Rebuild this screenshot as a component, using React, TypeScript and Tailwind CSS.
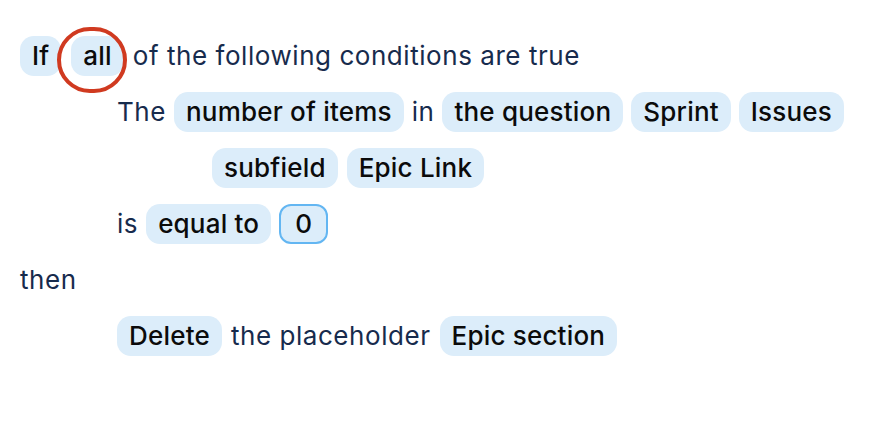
import React from "react";

function Chip({ children, outlined = false }: { children: React.ReactNode; outlined?: boolean }) {
  return (
    <span
      className={
        outlined
          ? "inline-flex items-center h-10 px-[14px] rounded-[12px] bg-[#dcedfa] border-2 border-[#63b6f2] text-[#0b0b0b] font-medium tracking-[0.2px]"
          : "inline-flex items-center h-10 px-3 rounded-[14px] bg-[#dcedfa] text-[#0b0b0b] font-medium tracking-[0.2px]"
      }
    >
      {children}
    </span>
  );
}

function Word({ children }: { children: React.ReactNode }) {
  return <span className="text-[#172b4d] tracking-[0.55px]">{children}</span>;
}

export default function App() {
  return (
    <div className="w-[890px] h-[422px] bg-white pt-[28px] pl-5 font-['Inter',sans-serif] text-[26px] leading-none">
      <div className="flex items-center h-14 gap-[9px]">
        <Chip>If</Chip>
        <span className="relative inline-flex ml-[1px]">
          <Chip>all</Chip>
          <span className="absolute left-[-14px] top-[-9px] w-[70px] h-[66px] rounded-full border-[4px] border-[#d03a20]" />
        </span>
        <Word>of the following conditions are true</Word>
      </div>
      <div className="flex items-center h-14 gap-[8px] pl-[97px]">
        <Word>The</Word>
        <Chip>number of items</Chip>
        <Word>in</Word>
        <Chip>the question</Chip>
        <Chip>Sprint</Chip>
        <Chip>Issues</Chip>
      </div>
      <div className="flex items-center h-14 gap-[9px] pl-[192px]">
        <Chip>subfield</Chip>
        <Chip>Epic Link</Chip>
      </div>
      <div className="flex items-center h-14 gap-[8px] pl-[97px]">
        <Word>is</Word>
        <Chip>equal to</Chip>
        <Chip outlined>0</Chip>
      </div>
      <div className="flex items-center h-14">
        <Word>then</Word>
      </div>
      <div className="flex items-center h-14 gap-[9px] pl-[97px]">
        <Chip>Delete</Chip>
        <Word>the placeholder</Word>
        <Chip>Epic section</Chip>
      </div>
    </div>
  );
}
